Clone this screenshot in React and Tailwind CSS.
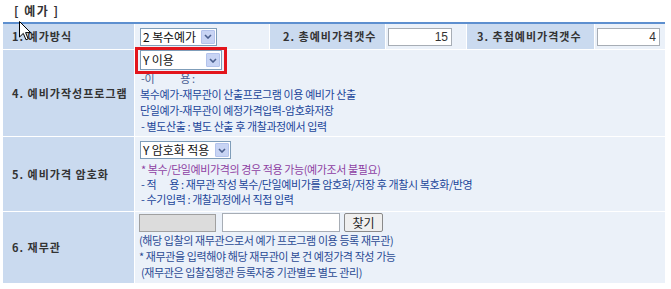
import React from "react";

const font = "font-['Noto_Sans_CJK_KR',sans-serif]";

// 선택 박스 (XP 스타일)
function FakeSelect({ value, className }) {
  return (
    <div
      className={`flex items-center justify-between bg-white border border-[#7f9db9] pl-[2px] pr-[1px] text-[12px] text-[#111] leading-none ${className}`}
    >
      <span className="tracking-[-0.1px] whitespace-nowrap">{value}</span>
      <span className="flex items-center justify-center w-[14px] h-[14px] bg-[#c8d4f4] border border-[#b3c3ec] rounded-[1px]">
        <svg width="8" height="5" viewBox="0 0 8 5">
          <path d="M1 1 L4 4 L7 1" fill="none" stroke="#4b5f8e" strokeWidth="1.6" />
        </svg>
      </span>
    </div>
  );
}

function Label({ children, className = "" }) {
  return (
    <div
      className={`flex items-center bg-[#cadaef] pl-[9px] text-[11px] font-bold text-[#333] tracking-[1px] whitespace-nowrap ${className}`}
    >
      {children}
    </div>
  );
}

export default function App() {
  return (
    <div className={`relative w-[671px] h-[289px] bg-white ${font}`}>
      {/* 제목 */}
      <div className="h-[22px] pl-[14px] pt-[3px] text-[12px] font-bold text-[#333] leading-[16px] tracking-[1.5px] whitespace-pre">
        [ 예가 ]
      </div>

      <div className="ml-[3px] w-[662px] border-t-2 border-[#5d8fcf] flex flex-col gap-px">
        {/* 1 ~ 3 */}
        <div className="flex h-[25px] gap-px">
          <Label className="w-[131px]">1. 예가방식</Label>
          <div className="w-[134px] bg-[#ebf1f9] flex items-center pl-[5px]">
            <FakeSelect value="2 복수예가" className="w-[77px] h-[18px]" />
          </div>
          <Label className="w-[115px] pl-[13px]">2. 총예비가격갯수</Label>
          <div className="w-[80px] bg-[#ebf1f9] flex items-center pl-[2px]">
            <div className="w-[64px] h-[18px] bg-white border border-[#a7adb5] text-right pr-[3px] text-[12px] leading-[16px] font-['Liberation_Sans',sans-serif] text-[#333]">
              15
            </div>
          </div>
          <Label className="w-[127px] pl-[10px]">3. 추첨예비가격갯수</Label>
          <div className="flex-1 bg-[#ebf1f9] flex items-center pl-[2px]">
            <div className="w-[63px] h-[18px] bg-white border border-[#a7adb5] text-right pr-[3px] text-[12px] leading-[16px] font-['Liberation_Sans',sans-serif] text-[#333]">
              4
            </div>
          </div>
        </div>

        {/* 4 */}
        <div className="flex h-[86px] gap-px">
          <Label className="w-[131px]">4. 예비가작성프로그램</Label>
          <div className="flex-1 bg-[#ebf1f9] pl-[5px] text-[11px] leading-[16px] tracking-[-0.4px] text-[#21459a]">
            <FakeSelect value="Y 이용" className="w-[82px] h-[20px]" />
            <div className="pl-[1px] text-[#4a5f93]">
              -이<span className="inline-block w-[26px]" />용 :
            </div>
            <div>복수예가-재무관이 산출프로그램 이용 예비가 산출</div>
            <div>단일예가-재무관이 예정가격입력-암호화저장</div>
            <div className="pl-[1px]">- 별도산출 : 별도 산출 후 개찰과정에서 입력</div>
          </div>
        </div>

        {/* 5 */}
        <div className="flex h-[74px] gap-px">
          <Label className="w-[131px]">5. 예비가격 암호화</Label>
          <div className="flex-1 bg-[#ebf1f9] pl-[5px] pt-[4px] text-[11px] leading-[15px] tracking-[-0.4px] text-[#21459a]">
            <FakeSelect value="Y 암호화 적용" className="w-[91px] h-[18px]" />
            <div className="mt-[3px] pl-[1px] text-[#8e3fa3]">
              * 복수/단일예비가격의 경우 적용 가능(예가조서 불필요)
            </div>
            <div className="pl-[1px]">
              - 적<span className="inline-block w-[13px]" />용 : 재무관 작성 복수/단일예비가를 암호화/저장 후 개찰시 복호화/반영
            </div>
            <div className="pl-[1px]">- 수기입력 : 개찰과정에서 직접 입력</div>
          </div>
        </div>

        {/* 6 */}
        <div className="flex h-[71px] gap-px">
          <Label className="w-[131px]">6. 재무관</Label>
          <div className="flex-1 bg-[#ebf1f9] pl-[4px] pt-[1px] text-[11px] leading-[16px] tracking-[-0.4px] text-[#2a4a94]">
            <div className="flex items-center h-[19px]">
              <div className="w-[77px] h-[18px] bg-[#dcdcdc] border border-[#a0a0a0]" />
              <div className="ml-[6px] w-[118px] h-[19px] bg-white border border-[#a7adb5]" />
              <div className="ml-[4px] w-[39px] h-[19px] flex items-center justify-center bg-[#efefef] border border-[#8a8a8a] rounded-[2px] text-[12px] text-[#222] tracking-normal">
                찾기
              </div>
            </div>
            <div>(해당 입찰의 재무관으로서 예가 프로그램 이용 등록 재무관)</div>
            <div>* 재무관을 입력해야 해당 재무관이 본 건 예정가격 작성 가능</div>
            <div className="pl-[2px]">(재무관은 입찰집행관 등록자중 기관별로 별도 관리)</div>
          </div>
        </div>
      </div>

      {/* 강조 박스 */}
      <div className="absolute left-[135px] top-[47px] w-[92px] h-[27px] border-[3px] border-[#e3151c]" />

      {/* 마우스 커서 */}
      <svg className="absolute left-[19px] top-[21px]" width="13" height="20" viewBox="0 0 13 20">
        <path d="M0.5 0.5 L0.5 16 L4.3 12.4 L7 18.8 L9.2 17.9 L6.6 11.6 L11.6 11.6 Z" fill="white" stroke="black" strokeWidth="1" />
      </svg>
    </div>
  );
}
